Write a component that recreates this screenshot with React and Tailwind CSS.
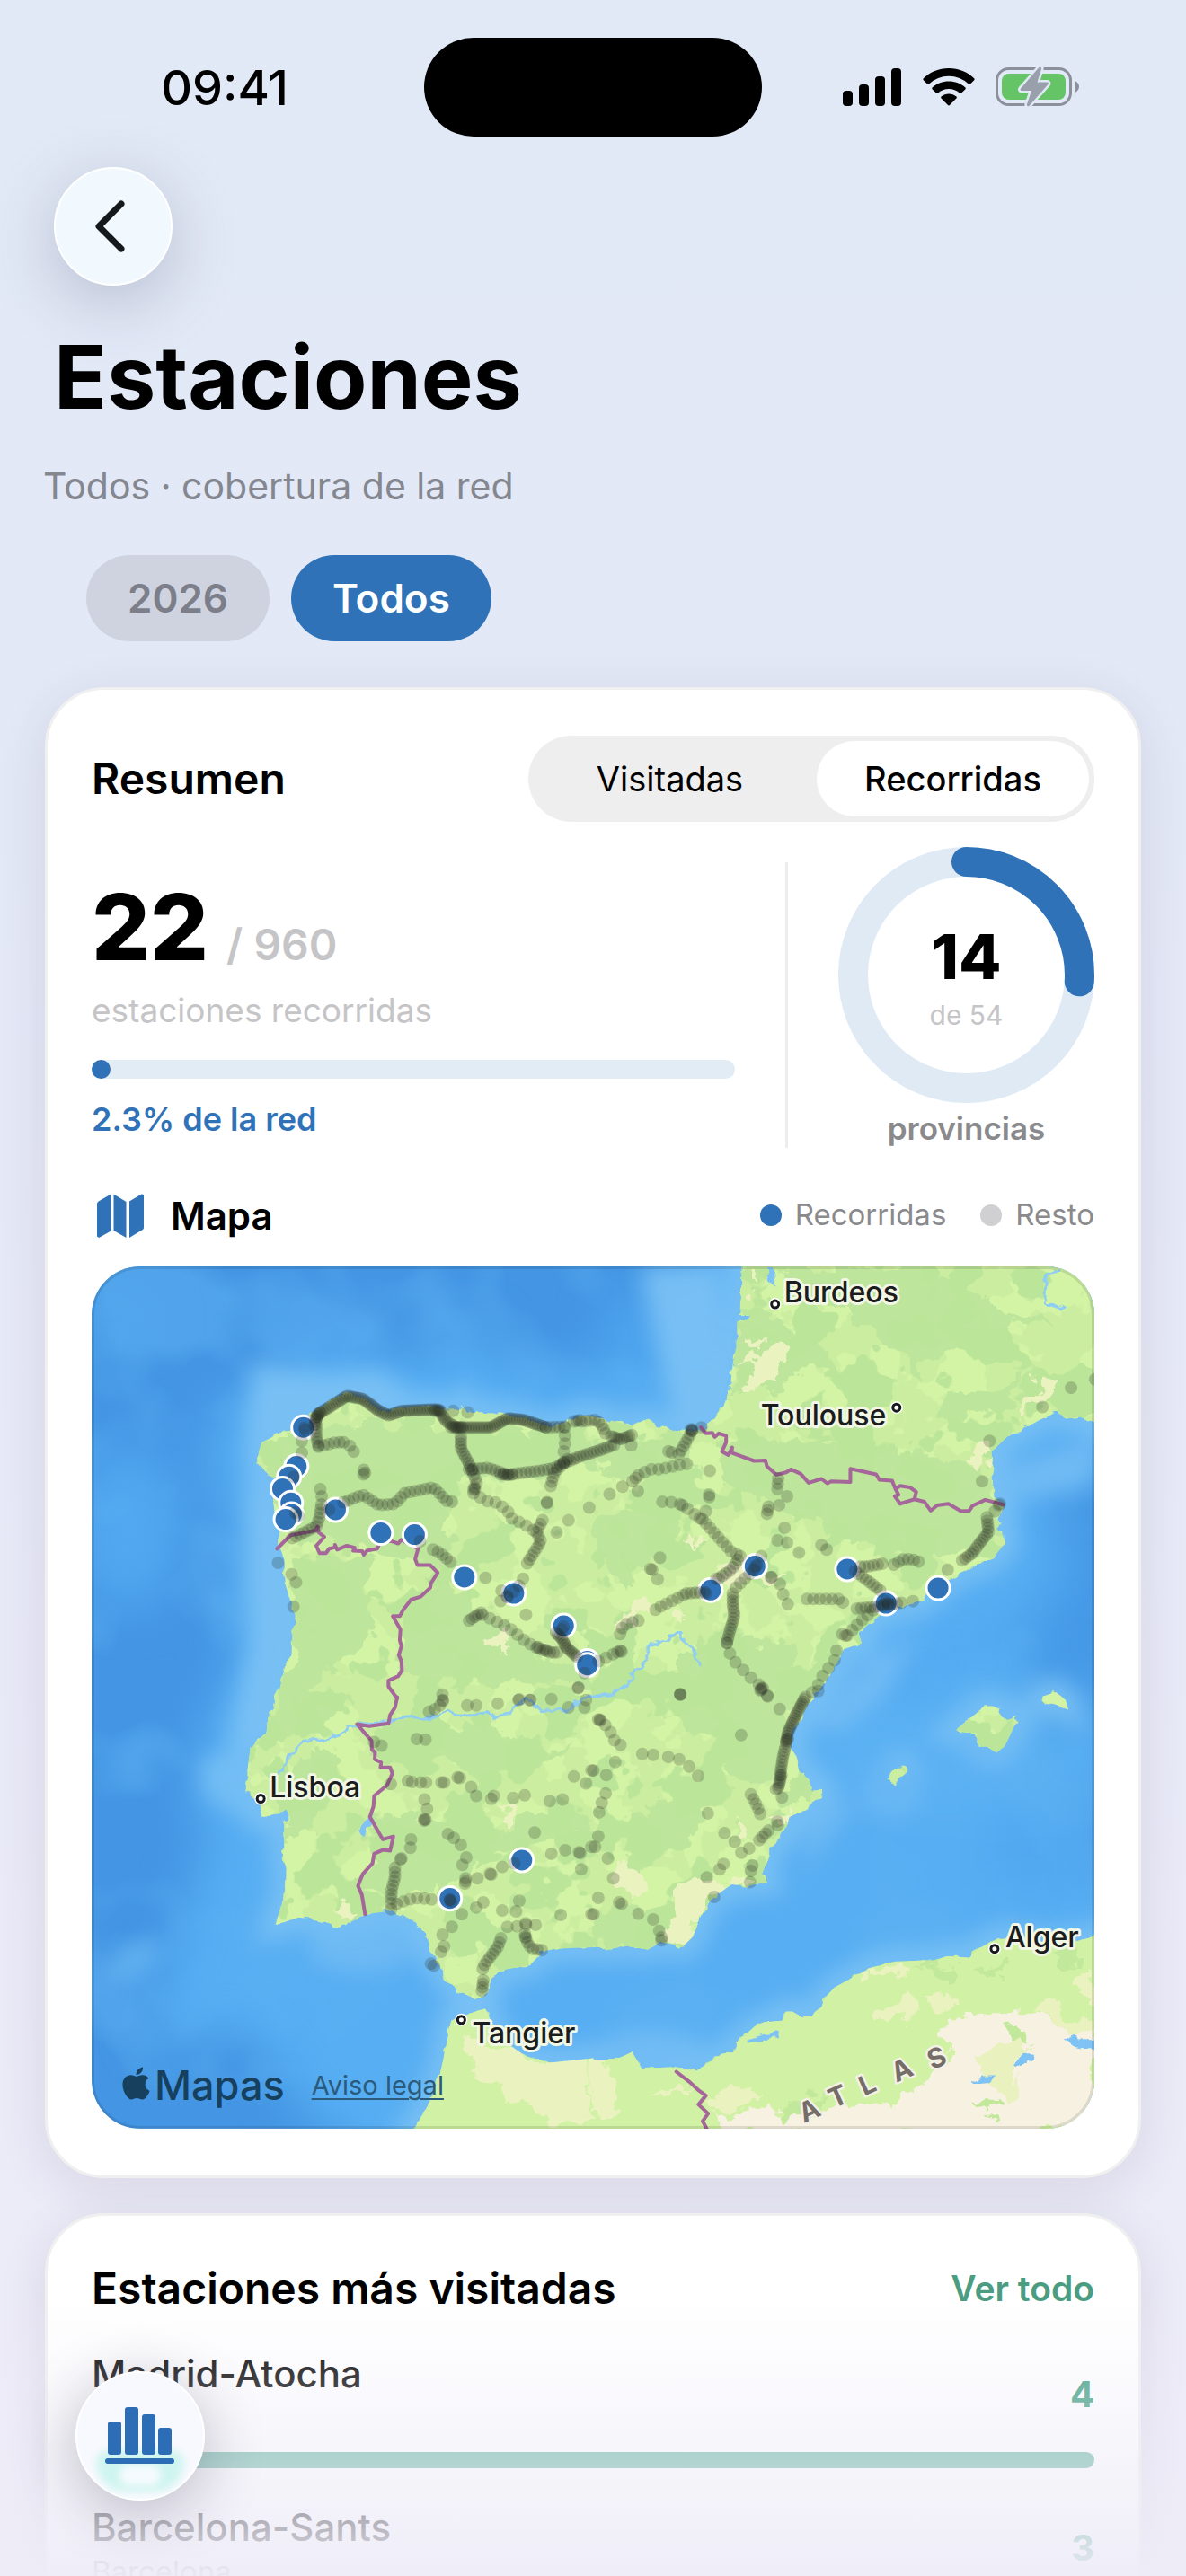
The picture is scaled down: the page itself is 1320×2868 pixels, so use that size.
import React from "react";
import { FaApple } from "react-icons/fa";

/* ---------- map geometry ---------- */

// Each sheet of the map has its own origin and scale: [originX, originY, unitsX, unitsY]
const SHEETS = {
  A: [-2, -11, 2.8, 3],
  B: [558, -11, 2.8, 3],
  C: [-2, 469, 2.8, 3],
  D: [558, 469, 2.8, 3],
  E: [278, 89, 3, 3],
};

const pts = (sheet, text) => {
  const [ox, oy, ux, uy] = SHEETS[sheet];
  return text
    .trim()
    .split(/\s+/)
    .map((p) => {
      const [x, y] = p.split(",").map(Number);
      return [x / ux + ox, y / uy + oy];
    });
};

const path = (parts, closed) =>
  "M" +
  parts
    .flatMap(([s, t]) => pts(s, t))
    .map(([x, y]) => `${x.toFixed(1)} ${y.toFixed(1)}`)
    .join("L") +
  (closed ? "Z" : "");

const EUROPE = path(
  [
    ["B", "462,0 460,120 455,195 490,195 480,210 448,220 445,300 435,350 425,440 405,500 375,545 340,575 300,590 250,580 200,565 160,545 120,565 30,540 0,535"],
    ["A", "1530,530 1490,550 1440,572 1380,550 1300,530 1260,520 1170,518 1160,495 1145,510 1100,512 1060,500 960,505 910,520 860,480 800,455 740,490 690,525 650,580 600,585 570,602 535,620 525,655 528,690 545,725 580,740 570,800 575,860 588,900 588,960 605,1010 610,1100 622,1140 640,1200 630,1260 628,1330 605,1380 590,1450"],
    ["C", "585,0 572,60 555,100 550,150 500,200 490,280 485,350 530,380 535,430 580,420 612,405 625,440 605,450 605,530 600,550 612,600 608,700 595,730 578,790 650,765 720,775 770,797 800,790 855,755 930,745 1000,770 1045,810 1060,880 1090,930 1110,970 1150,1010 1200,1038 1235,1020 1250,970 1290,940 1370,925 1410,880 1440,870 1568,865"],
    ["D", "0,860 40,875 100,860 170,872 210,845 240,850 275,865 310,830 330,770 360,710 430,655 480,660 540,648 525,620 545,560 565,510 600,470 610,430 665,405 680,380 712,358 712,342 680,345 672,305 640,280 632,230 612,195 612,160 640,110 665,60"],
    ["B", "690,1465 740,1390 780,1310 835,1290 825,1255 900,1190 950,1170 1030,1145 1090,1085 1150,1050 1200,1020 1240,1010 1280,960 1278,930 1255,910 1270,890 1265,860 1275,830 1245,800 1240,650 1290,600 1330,580 1390,545 1440,520 1480,540 1515,535 1570,560 1570,0"],
  ],
  true
);

const AFRICA = path(
  [
    ["C", "1000,1490 1060,1380 1090,1290 1110,1190 1125,1110 1200,1080 1230,1070 1240,1085 1250,1120 1275,1180 1310,1195 1360,1230 1430,1250 1568,1235"],
    ["D", "0,1240 70,1240 120,1215 150,1270 240,1265 320,1278 370,1245 400,1220 440,1215 450,1180 500,1130 530,1115 590,1110 600,1080 620,1080 650,1100 680,1095 690,1080 710,1065 720,1035 750,1000 800,970 860,935 940,912 1060,908 1100,895 1170,900 1200,870 1230,850 1300,830 1400,850 1480,850 1570,828 1570,1490"],
  ],
  true
);

const ISLANDS = [
  path([["D", "1128,140 1150,120 1180,95 1215,62 1240,60 1265,65 1270,95 1290,105 1318,98 1320,110 1300,150 1280,195 1255,215 1225,195 1200,195 1190,150 1165,148"]], true),
  path([["D", "1398,28 1440,14 1470,40 1478,72 1440,55 1400,45"]], true),
  path([["D", "912,300 945,262 965,262 975,282 935,322"]], true),
].join("");

const LAND = EUROPE + AFRICA + ISLANDS;

const DARK_PATCHES = [
  path([["B", "480,170 560,190 640,260 735,330 735,360 660,385 600,410 520,455 430,450 445,300 460,170"]], true),
  path([["B", "600,40 1090,40 1120,110 1180,130 1290,200 1400,200 1440,240 1310,230 1280,290 1180,310 1060,320 1015,420 975,340 960,310 860,250 800,180 700,160 610,150"]], true),
  path([["B", "1090,450 1330,420 1310,480 1250,520 1130,550 1085,520"]], true),
  path([["B", "380,600 560,600 760,625 960,640 1060,660 1230,700 1240,800 1270,840 1240,960 1120,1000 940,980 850,975 740,930 620,870 540,830 440,770 400,690"]], true),
  path([["B", "10,880 120,840 230,860 270,930 220,960 150,1030 110,1100 40,1040 10,960"]], true),
  path([["B", "0,590 130,610 260,600 330,700 250,740 100,730 0,700"]], true),
  path([["A", "530,640 720,560 900,560 1560,590 1560,700 1150,760 1110,880 1130,950 1100,1040 900,980 620,940 590,800 540,720"]], true),
  path([["A", "620,1010 900,1000 860,1120 880,1280 740,1400 640,1490 590,1480 640,1300"]], true),
  path([["A", "1090,1080 1200,1180 1290,1250 1420,1330 1560,1380 1560,1440 1350,1420 1100,1430 960,1380 970,1200"]], true),
  path([["C", "600,0 820,20 740,90 690,150 570,160 560,80"]], true),
  path([["C", "650,210 760,200 800,260 740,330 740,400 690,480 620,520 605,400 640,300"]], true),
  path([["C", "900,130 1240,110 1390,200 1490,190 1400,260 1240,290 1120,240 1020,240 880,210"]], true),
  path([["C", "880,420 1040,440 1180,480 1180,640 1080,680 930,700 830,650 900,560"]], true),
  path([["C", "1180,510 1360,430 1560,420 1560,500 1320,530 1200,600"]], true),
  path([["D", "250,0 580,0 600,180 590,300 500,320 420,270 430,210 370,140 290,130"]], true),
  path([["D", "110,440 240,360 310,340 330,460 260,540 130,620 105,520"]], true),
  path([["D", "0,760 110,740 210,780 180,860 0,860"]], true),
  path([["D", "570,330 660,310 680,380 600,400"]], true),
  path([["B", "330,1290 620,1290 620,1500 300,1500 250,1400"]], true),
].join("");

const SAND_PATCHES = [
  path([["B", "450,350 480,345 490,315 510,330 560,310 598,325 590,380 560,400 530,430 500,458 468,440 490,400 490,370"]], true),
  path([["B", "478,262 500,255 522,280 520,300 480,282"]], true),
  path([["B", "485,36 510,36 505,80 525,105 515,112 488,80"]], true),
  path([["B", "1380,400 1430,410 1400,460 1360,530 1342,530 1355,460"]], true),
  path([["B", "1175,655 1220,635 1245,640 1235,700 1210,722 1190,690"]], true),
  path([["B", "295,960 315,930 340,965"]], true),
  path([["B", "380,1040 420,1030 480,1060 590,1070 560,1110 500,1085 400,1090"]], true),
  path([["B", "130,1150 170,1140 160,1190 110,1230 80,1240"]], true),
  path([["B", "240,1170 275,1190 270,1212 230,1200"]], true),
  path([["A", "1255,1275 1290,1265 1295,1300 1275,1318"]], true),
  path([["C", "770,735 800,700 828,735 815,760 780,755"]], true),
  path([["C", "1285,375 1320,400 1320,440 1300,440"]], true),
  path([["D", "245,670 300,650 350,625 480,640 460,665 420,660 350,710 330,770 305,840 275,865 240,845 215,800 260,760 245,720"]], true),
  path([["D", "80,620 120,605 150,650 120,690 85,680"]], true),
  path([["D", "545,445 600,410 640,415 610,440 580,460"]], true),
  path([["D", "445,470 465,445 495,480 480,505"]], true),
  path([["C", "1165,1170 1300,1190 1420,1250 1560,1240 1560,1440 1500,1470 1430,1450 1390,1370 1320,1390 1290,1320 1210,1310 1180,1260"]], true),
  path([["D", "0,1245 60,1240 50,1310 80,1400 40,1440 0,1400"]], true),
  path([["D", "820,985 870,940 940,915 985,915 980,950 900,960"]], true),
  path([["D", "890,1050 980,1030 1015,1060 960,1100 930,1135 895,1100"]], true),
  path([["D", "1040,1060 1100,1030 1130,1085 1080,1075"]], true),
  path([["D", "360,1390 420,1330 530,1340 480,1380 400,1410"]], true),
  path([["D", "170,1360 240,1330 320,1325 250,1355"]], true),
  path([["D", "1490,990 1562,940 1562,1060 1520,1020"]], true),
].join("");

const DESERT = path(
  [["D", "1110,1130 1180,1080 1240,1105 1290,1080 1400,1100 1562,1160 1562,1480 420,1480 380,1430 470,1400 560,1410 590,1440 660,1400 800,1390 880,1400 990,1350 1060,1300 1110,1200 1075,1130"]],
  true
);

const STEPPE = [
  path([["D", "1360,1080 1430,1045 1490,1080 1562,1120 1562,1165 1480,1130"]], true),
  path([["D", "1205,1220 1330,1170 1360,1180 1300,1240 1310,1340 1250,1340 1200,1290"]], true),
  path([["D", "1280,1340 1350,1290 1320,1390 1290,1390"]], true),
].join("");

const OASES = [
  path([["D", "1265,1130 1310,1118 1355,1165 1300,1180"]], true),
  path([["D", "1195,1400 1230,1380 1265,1390 1235,1435"]], true),
  path([["D", "1180,950 1285,915 1290,940 1240,960"]], true),
  path([["D", "990,915 1060,915 1135,940 1100,970 1060,945"]], true),
  path([["D", "1420,890 1530,880 1520,930 1450,930"]], true),
  path([["D", "570,1420 640,1380 740,1350 680,1430 600,1440"]], true),
].join("");

const LAKES = [
  path([["D", "485,1178 500,1160 575,1150 572,1165 520,1180"]], true),
  path([["D", "1308,1265 1335,1225 1370,1220 1365,1235 1318,1270"]], true),
  path([["D", "1178,1320 1210,1292 1248,1292 1235,1315"]], true),
  path([["D", "1470,1175 1490,1158 1510,1170 1562,1168 1562,1210 1500,1195"]], true),
  path([["C", "835,480 880,420 885,445 850,495"]], true),
  path([["B", "538,36 555,36 565,95 548,80"]], true),
].join("");

const BORDERS = [
  path([
    ["A", "583,975 625,930 700,915 710,900 712,920 730,935 722,945 705,965 715,990 735,990 745,975 765,970 763,962 770,978 800,965 825,972 820,982 848,983 853,995 862,982 895,975 905,950 940,950 960,958 970,945 1000,962 1022,975 1013,1010 1020,1030 1060,1030 1083,1055 1062,1090 1060,1105 1030,1135 1000,1145 975,1180 965,1200 943,1200 967,1245 965,1280 970,1300 962,1330 970,1350 972,1380 960,1400 930,1415 930,1435 957,1475"],
    ["C", "957,30 950,65 935,90 930,118 870,127 832,120 860,155 877,175 878,205 888,215 887,238 907,248 905,265 935,265 942,285 925,325 885,360 883,395 872,430 912,505 945,495 935,543 912,540 885,553 880,585 850,620 835,660 847,690 857,755"],
  ]),
  path([["B", "335,570 350,590 370,588 378,602 390,590 413,598 413,620 400,650 420,662 432,637 430,655 500,682 535,680 540,700 570,728 600,720 615,710 645,725 670,755 710,742 728,757 740,750 800,752 800,708 880,727 890,745 930,748 940,775 950,795 938,800 955,825 1000,810 1030,818 1050,848 1070,830 1105,825 1145,850 1170,848 1180,832 1220,812 1275,828"]]),
  path([["B", "942,775 955,765 985,770 1005,785 1000,808"]]),
  path([["D", "258,1280 300,1315 325,1340 350,1360 327,1390 357,1420 340,1445 355,1475"]]),
].join("");

const RIVERS = [
  path([
    ["B", "333,1368 315,1320 268,1263 235,1265 225,1282 172,1300 150,1375 130,1385 100,1430 55,1465 0,1465"],
    ["C", "1540,35 1490,70 1435,77 1405,75 1360,38 1325,60 1307,88 1260,92 1230,78 1200,90 1150,92 1115,77 1080,90 1040,103 1005,92 940,108 930,118 832,122 800,130 775,158 720,172 660,177 625,220 610,260 585,290"],
  ]),
  path([["B", "1450,40 1410,55 1405,150 1450,180 1465,158"]]),
].join("");

// [sheet, spacing between stops, route]
const ROUTES = [
  ["A", 3, "700,560 710,525 750,500 800,465 850,475 900,515 930,530 970,515 1085,510 1110,550 1140,570 1250,570 1300,540 1350,545 1420,570"],
  ["A", 3, "700,540 720,520"],
  ["A", 3, "1075,515 1095,515"],
  ["A", 3, "1125,570 1160,570"],
  ["A", 5, "1420,570 1485,568"],
  ["A", 4, "705,560 705,600 712,635"],
  ["A", 6, "712,635 765,620 790,620"],
  ["A", 8, "790,620 815,635 827,665"],
  ["A", 4, "1155,600 1155,640 1180,690 1190,715"],
  ["A", 5, "1190,715 1205,755 1195,775"],
  ["A", 5, "1180,710 1240,705 1300,728 1400,715 1450,705 1490,675"],
  ["A", 3, "1280,727 1320,728"],
  ["A", 5, "630,940 660,925 705,900 715,870 722,820"],
  ["A", 8, "722,800 715,765"],
  ["A", 6, "790,820 850,795 900,830 950,825 980,790 1070,770 1110,815 1140,820"],
  ["E", 3, "775,250 800,245"],
  ["E", 5, "800,250 850,245 870,265 880,290"],
  ["E", 3, "900,300 930,310 970,295"],
  ["E", 4, "740,390 800,365 850,350 920,325"],
  ["E", 9, "745,270 745,335 735,375"],
  ["E", 5, "740,390 710,420 695,475"],
  ["E", 5, "670,580 650,620 665,650 640,690 615,730"],
  ["E", 9, "605,775 585,810 530,850 520,870"],
  ["E", 9, "440,490 480,515 520,522 555,550 560,570 620,600 650,620"],
  ["E", 5, "970,450 990,430"],
  ["E", 8, "990,430 1030,410 1060,410 1130,395 1165,390"],
  ["E", 4, "1090,350 1105,355"],
  ["E", 5, "1125,360 1145,325 1170,280"],
  ["E", 10, "1070,518 1100,520 1137,528 1170,555 1215,585"],
  ["E", 7, "1215,590 1250,630 1300,685 1330,700"],
  ["E", 5, "1330,700 1300,745 1250,780"],
  ["E", 5, "1210,820 1140,825"],
  ["E", 7, "1140,830 1060,870 1030,890"],
  ["E", 7, "990,915 940,930 925,970"],
  ["E", 9, "930,1015 880,1040 835,1060"],
  ["E", 7, "1375,745 1310,810"],
  ["E", 4, "1305,825 1305,860 1310,900 1295,950 1285,990"],
  ["E", 12, "1285,990 1300,1040 1340,1080 1370,1110 1400,1135"],
  ["E", 6, "305,678 330,690 370,725"],
  ["E", 4, "425,915 440,905 470,885"],
  ["E", 9, "470,895 560,940 620,990 700,1020"],
  ["E", 4, "650,1005 700,1022 730,1020"],
  ["E", 3, "715,955 735,975 750,1005 790,1040"],
  ["B", 6, "575,740 572,790"],
  ["B", 4, "545,835 540,860"],
  ["B", 5, "830,1035 850,1035 900,1025"],
  ["B", 6, "935,1028 970,1008 1010,1015 1022,1030"],
  ["B", 5, "815,1050 870,1095 900,1120"],
  ["B", 5, "820,1175 870,1170 960,1155"],
  ["B", 7, "665,1143 770,1143 780,1160"],
  ["B", 12, "555,1070 580,1090 590,1125 605,1160"],
  ["B", 4, "1225,870 1230,920 1200,960 1180,990 1140,1020"],
  ["B", 8, "870,1180 820,1230 790,1265"],
  ["B", 4, "775,1260 795,1270"],
  ["B", 11, "757,1315 750,1350 715,1395 695,1440 660,1475"],
  ["D", 3, "660,30 630,90 605,150 600,185"],
  ["D", 4, "600,185 590,230 580,300"],
  ["D", 3, "585,290 575,335 565,338"],
  ["D", 6, "490,355 510,395 525,435"],
  ["D", 4, "573,445 575,462"],
  ["D", 5, "545,475 510,515"],
  ["D", 10, "485,535 460,550"],
  ["D", 10, "15,105 45,130 60,160 70,188 88,190"],
  ["C", 7, "1098,22 1100,50 1075,70 1050,82"],
  ["C", 5, "990,310 1010,315"],
  ["C", 6, "1030,315 1050,315"],
  ["C", 5, "950,600 950,635 940,670 938,720"],
  ["C", 8, "955,720 1010,700 1050,703 1080,708"],
  ["C", 5, "1355,820 1360,845 1375,870 1410,875"],
  ["C", 5, "1280,835 1270,865 1230,920 1220,945"],
  ["C", 4, "1225,975 1222,1000 1220,1015"],
  ["C", 4, "1062,920 1078,932"],
];

const STOPS = [
  ["A", "660,615 660,655 853,712 857,722 852,727 586,1022 628,1060 642,1087 634,1168 670,578 668,572 635,735 650,865 640,855 745,845 1028,950 1300,1137 1282,1115"],
  ["E", "372,215 420,220 717,620 757,580 826,538 894,493 988,483 937,468 966,330 1228,415 1226,495 1226,503 1215,550 1137,530 1195,573 1062,705 1030,742 1036,745 1054,777 480,772 615,895 790,1138 1400,700 1432,770 1130,1160 1130,1162 685,520 685,523 1170,278 1167,282 1165,276 1200,270 1400,1140 1405,1140 1420,1165 920,1020 934,1018 1250,775 1380,735 1385,730 1215,825 740,935 735,945 810,1090 440,478 445,476 590,1180 630,1180 337,1180"],
  ["B", "603,800 578,830 595,905 573,947 603,955 640,988 710,963 726,978 995,1150 1265,825 1262,830 1250,850 1103,1045 1487,438 1398,502 1233,615 1210,750 1562,410 910,1150 905,1160 918,1158"],
  ["D", "587,365 700,10 440,513 408,484 356,418 460,157 580,70 542,28 522,5 270,22 495,592 490,610 488,648 405,587 393,605 353,632 376,697 68,247 40,290 38,352 26,383 18,415 152,220 186,223 233,230 267,238 298,262 326,293 15,495 5,530 45,568 62,635 15,700 80,715 88,720 140,753 186,772 205,810 212,832 212,842 0,275 0,755 20,105 22,108 520,8 600,175 605,170"],
  ["C", "1175,58 1203,58 1270,52 1337,38 1370,40 1437,37 1490,65 1540,65 1520,0 1545,40 885,180 908,192 1018,170 1045,172 937,320 1095,315 1103,315 1145,298 1152,300 1187,330 1203,360 1250,370 1258,360 1318,367 1354,358 1432,377 1472,372 1507,295 1545,318 1562,275 1042,372 1050,403 1042,437 1045,440 1040,442 1000,505 998,533 970,568 967,572 938,738 1115,487 1133,500 1155,523 1172,565 1160,590 1170,635 1170,645 1168,652 1207,635 1246,620 1250,622 1284,597 1322,585 1385,482 1437,553 1480,541 1523,548 1527,551 1530,605 1562,530 1158,755 1203,732 1225,715 1127,797 1098,823 1103,862 1094,880 1284,742 1327,745 1337,710 1466,757 1562,755 1300,797 1330,795 1357,785 1358,790 1388,790 1355,830 1120,708 1125,712 1122,705"],
];

const VISITED = [
  ["A", "665,570 643,700 620,735 600,775 626,822 628,860 610,877 765,845 906,922 1011,928 1166,1070 1320,1124 1475,1232 1549,1350 1549,1363"],
  ["B", "503,1033 365,1113 790,1043 911,1157 1073,1106"],
  ["C", "1345,574 1121,702"],
].flatMap(([s, t]) => pts(s, t));

const along = (points, step) => {
  const out = [points[0]];
  let carry = 0;
  for (let i = 1; i < points.length; i++) {
    const [x0, y0] = points[i - 1];
    const [x1, y1] = points[i];
    const len = Math.hypot(x1 - x0, y1 - y0);
    let d = step - carry;
    while (d <= len) {
      out.push([x0 + ((x1 - x0) * d) / len, y0 + ((y1 - y0) * d) / len]);
      d += step;
    }
    carry = len - (d - step);
  }
  return out;
};

const REST = [
  ...ROUTES.flatMap(([s, step, t]) => along(pts(s, t), step)),
  ...STOPS.flatMap(([s, t]) => pts(s, t)),
];

const CITIES = [
  { name: "Burdeos", x: 770, y: 40, cx: 760, cy: 42 },
  { name: "Toulouse", x: 744, y: 177, cx: 895, cy: 157 },
  { name: "Lisboa", x: 198, y: 590, cx: 188, cy: 592 },
  { name: "Tangier", x: 423, y: 864, cx: 411, cy: 838 },
  { name: "Alger", x: 1016, y: 757, cx: 1004, cy: 759 },
];

function NetworkMap() {
  return (
    <svg viewBox="0 0 1115 959" className="block w-full" role="img" aria-label="Mapa de estaciones">
      <defs>
        <clipPath id="land">
          <path d={LAND} />
        </clipPath>
        <filter id="soft-wide" x="-50%" y="-50%" width="200%" height="200%" colorInterpolationFilters="sRGB">
          <feGaussianBlur stdDeviation="26" />
        </filter>
        <filter id="soft" x="-50%" y="-50%" width="200%" height="200%" colorInterpolationFilters="sRGB">
          <feGaussianBlur stdDeviation="12" />
        </filter>
        <filter id="ragged" x="0" y="0" width="100%" height="100%" colorInterpolationFilters="sRGB">
          <feTurbulence type="fractalNoise" baseFrequency="0.04" numOctaves="4" seed="4" />
          <feDisplacementMap in="SourceGraphic" scale="40" xChannelSelector="R" yChannelSelector="G" />
        </filter>
        <filter id="ragged-fine" x="0" y="0" width="100%" height="100%" colorInterpolationFilters="sRGB">
          <feTurbulence type="fractalNoise" baseFrequency="0.09" numOctaves="2" seed="8" />
          <feDisplacementMap in="SourceGraphic" scale="10" xChannelSelector="R" yChannelSelector="G" />
        </filter>
        <filter id="mottle" x="0" y="0" width="100%" height="100%" colorInterpolationFilters="sRGB">
          <feTurbulence type="fractalNoise" baseFrequency="0.018" numOctaves="4" seed="11" />
          <feColorMatrix values="0 0 0 0 0.735  0 0 0 0 0.898  0 0 0 0 0.6  40 0 0 0 -22" />
        </filter>
        <filter id="mottle-light" x="0" y="0" width="100%" height="100%" colorInterpolationFilters="sRGB">
          <feTurbulence type="fractalNoise" baseFrequency="0.02" numOctaves="4" seed="29" />
          <feColorMatrix values="0 0 0 0 0.828  0 0 0 0 0.953  0 0 0 0 0.648  40 0 0 0 -20" />
        </filter>
        <filter id="waves" x="0" y="0" width="100%" height="100%" colorInterpolationFilters="sRGB">
          <feTurbulence type="fractalNoise" baseFrequency="0.007" numOctaves="3" seed="5" />
          <feColorMatrix values="0 0 0 0 0.37  0 0 0 0 0.7  0 0 0 0 0.95  4 0 0 0 -1.9" />
        </filter>
      </defs>

      <rect width="1115" height="959" fill="#4496e4" />
      <g filter="url(#soft-wide)">
        <path d="M560 959L640 800L800 640L900 480L1000 330L1115 300V800L900 900Z" fill="#52a8f0" />
        <path d="M60 860L140 600L250 560L420 640L700 650L1000 600L1000 830L400 959L250 959L180 850Z" fill="#57aef2" />
        <path d={LAND} fill="none" stroke="#57aef2" strokeWidth="110" />
        <ellipse cx="40" cy="290" rx="60" ry="90" fill="#52a8f0" />
        <ellipse cx="950" cy="540" rx="150" ry="70" fill="#5bb1f3" />
        <ellipse cx="20" cy="60" rx="50" ry="30" fill="#4a9fe9" />
        <ellipse cx="620" cy="80" rx="50" ry="60" fill="#4fa5ee" />
        <path d="M1040 420L1115 300V480L1060 540Z" fill="#4599e6" />
      </g>
      <rect width="1115" height="959" filter="url(#waves)" opacity=".5" />
      <g filter="url(#soft)" opacity=".9">
        <path d={LAND} fill="none" stroke="#7cc2f5" strokeWidth="30" />
        <path d="M610 0L700 0V190L650 190Z" fill="#7cc2f5" />
        <path d="M180 110L260 120L320 115L370 150L280 170L170 200Z" fill="#7cc2f5" />
        <path d="M170 230L205 280L225 420L190 520L150 540L175 420Z" fill="#7cc2f5" />
        <path d="M120 550L180 530L175 620L125 590Z" fill="#76bff5" />
        <path d="M870 435L920 410L880 480L830 520L800 510Z" fill="#74bdf5" />
        <path d="M800 590L850 600L810 650L790 680Z" fill="#70bbf4" />
        <path d="M960 510L1030 480L1020 540L990 560Z" fill="#72bcf4" />
        <path d="M1000 230L1115 190V240L1040 260Z" fill="#74bdf5" />
        <ellipse cx="890" cy="585" rx="36" ry="30" fill="#6ab8f4" />
        <ellipse cx="620" cy="870" rx="60" ry="20" fill="#74bdf5" />
        <ellipse cx="300" cy="760" rx="60" ry="24" fill="#70bbf4" />
      </g>
      <path d="M10 790L60 750L70 760L20 800Z" fill="#6cb8f2" filter="url(#soft)" />

      <g filter="url(#ragged-fine)">
        <path d={LAND} fill="#cbeda0" />
      </g>
      <g clipPath="url(#land)">
        <rect width="1115" height="959" filter="url(#mottle-light)" />
        <g filter="url(#ragged)">
          <rect width="1115" height="959" fill="none" />
          <path d={DARK_PATCHES} fill="#bde59b" />
        </g>
        <rect width="1115" height="959" filter="url(#mottle)" />
        <g filter="url(#ragged)">
          <rect width="1115" height="959" fill="none" />
          <path d={AFRICA} fill="#d1f2a4" stroke="#d1f2a4" strokeWidth="20" />
          <path d={DESERT} fill="#f6f1e0" />
          <path d={SAND_PATCHES} fill="#eaf2c0" />
          <path d={STEPPE} fill="#e9f1bf" />
          <path d={OASES} fill="#c2e89c" />
        </g>
      </g>
      <g filter="url(#ragged-fine)">
        <path d={LAKES} fill="#7fc3f5" />
        <path d={RIVERS} fill="none" stroke="#8fcdf3" strokeWidth="3" strokeLinejoin="round" />
      </g>
      <path d={BORDERS} fill="none" stroke="#a5669a" strokeWidth="4" strokeLinejoin="round" strokeLinecap="round" />

      {VISITED.map(([x, y], i) => (
        <circle key={i} cx={x} cy={y} r="13" fill="#2f72b8" stroke="#fff" strokeWidth="3" />
      ))}
      {REST.map(([x, y], i) => (
        <circle key={i} cx={x} cy={y} r="7" fill="#25281f" fillOpacity=".22" />
      ))}

      {CITIES.map((c) => (
        <g key={c.name}>
          <circle cx={c.cx} cy={c.cy} r="4" fill="#fff" stroke="#fff" strokeWidth="6" />
          <circle cx={c.cx} cy={c.cy} r="4" fill="#fff" stroke="#17191b" strokeWidth="3" />
          <text
            x={c.x}
            y={c.y}
            className="font-medium"
            fontSize="32"
            fill="#1a1c1e"
            stroke="#f1f7e4"
            strokeWidth="6"
            strokeLinejoin="round"
            paintOrder="stroke"
          >
            {c.name}
          </text>
        </g>
      ))}
      <text
        x="792 825 859 895 935"
        y="953 937 923 908 894"
        rotate="-24"
        className="font-bold"
        fontSize="30"
        fill="#756d68"
        stroke="#f4f1e6"
        strokeWidth="5"
        strokeLinejoin="round"
        paintOrder="stroke"
      >
        ATLAS
      </text>
    </svg>
  );
}

/* ---------- icons ---------- */

const Signal = () => (
  <svg viewBox="0 0 66 42" className="h-[42px] w-[66px]" aria-hidden="true">
    <rect x="0" y="25" width="11" height="17" rx="4" />
    <rect x="18" y="18" width="11" height="24" rx="4" />
    <rect x="36" y="9" width="11" height="33" rx="4" />
    <rect x="54" y="0" width="11" height="42" rx="4" />
  </svg>
);

const Wifi = () => (
  <svg viewBox="0 0 58 42" className="h-[42px] w-[58px]" aria-hidden="true">
    <path d="M29 0C18 0 8 4 .8 11.200a1.500 1.500 0 0 0 0 2L5 17.500a1.500 1.500 0 0 0 2 0A32 32 0 0 1 51 17.500a1.500 1.500 0 0 0 2 0L57.200 13.200a1.500 1.500 0 0 0 0-2C50 4 40 0 29 0Z" />
    <path d="M29 14.500C22 14.500 15.500 17 10.700 21.300a1.500 1.500 0 0 0 0 2.100L15 27.600a1.500 1.500 0 0 0 2 0A18 18 0 0 1 41 27.600a1.500 1.500 0 0 0 2 0L47.300 23.400a1.500 1.500 0 0 0 0-2.100C42.500 17 36 14.500 29 14.500Z" />
    <path d="M29 28.500c-3 0-6 1-8.400 2.900a1.500 1.500 0 0 0 0 2.200L28 41a1.500 1.500 0 0 0 2 0l7.400-7.400a1.500 1.500 0 0 0 0-2.200C35 29.500 32 28.500 29 28.500Z" />
  </svg>
);

const Battery = () => (
  <svg viewBox="0 0 94 46" className="h-[46px] w-[94px]" aria-hidden="true">
    <rect x="1.500" y="2.500" width="82" height="40" rx="13" fill="none" stroke="#8b909b" strokeWidth="3" />
    <path d="M88 16c3 1 5 3.500 5 6.500s-2 5.500-5 6.500Z" fill="#8b909b" />
    <rect x="7" y="8" width="71" height="29" rx="8" fill="#65c466" />
    <path
      d="M48 1.500L28 24.500c-1 1.200-.3 2.500 1 2.500h11l-5 15c-.7 2.200 1.500 3 2.800 1.400L58.500 20c1-1.200.3-2.500-1-2.500H46.500L51 3c.7-2.200-1.500-3-3-1.500Z"
      fill="#9aa0ab"
      stroke="#e2e9f6"
      strokeWidth="5"
      paintOrder="stroke"
    />
  </svg>
);

const MapIcon = () => (
  <svg viewBox="0 0 52 49" className="h-[49px] w-[52px]" fill="#2f72b8" aria-hidden="true">
    <path d="M15.500.5V41.500L3 48.500C1.500 49.200 0 48.500 0 46.500V11.500C0 10 .6 9 2 8.200Z" />
    <path d="M18.500.5L32.500 9V49L18.500 41Z" />
    <path d="M36 8.500L49 .8C50.500 0 52 .8 52 2.500V37.500C52 39 51.500 39.800 50 40.600L36 49Z" />
  </svg>
);

const BarsIcon = () => (
  <svg viewBox="0 0 78 64" className="relative h-[64px] w-[78px]" fill="#2d6db6" aria-hidden="true">
    <rect x="3" y="16" width="15" height="37" rx="3" />
    <rect x="22" y="0" width="15" height="53" rx="3" />
    <rect x="41" y="8" width="15" height="45" rx="3" />
    <rect x="59" y="23" width="15" height="30" rx="3" />
    <rect x="0" y="57" width="77" height="6" rx="3" />
  </svg>
);

/* ---------- pieces ---------- */

function Card({ children }) {
  return (
    <section className="rounded-[66px] border-[3px] border-[#f0f0f1] bg-white px-[49px] pt-[51px] pb-[52px] shadow-[0_12px_54px_rgba(60,50,70,0.11)]">
      {children}
    </section>
  );
}

function Ring({ value, total }) {
  const r = 126;
  const c = 2 * Math.PI * r;
  return (
    <div className="grid size-[285px] place-items-center">
      <svg viewBox="0 0 285 285" className="col-start-1 row-start-1 size-full -rotate-90" aria-hidden="true">
        <circle cx="142.500" cy="142.500" r={r} fill="none" stroke="#dfeaf5" strokeWidth="33" />
        <circle
          cx="142.500"
          cy="142.500"
          r={r}
          fill="none"
          stroke="#2f72b8"
          strokeWidth="33"
          strokeLinecap="round"
          strokeDasharray={`${(c * value) / total} ${c}`}
        />
      </svg>
      <div className="col-start-1 row-start-1 flex flex-col items-center pt-[12px] text-center">
        <span className="text-[69px] leading-[76px] font-extrabold">{value}</span>
        <span className="text-[30px] leading-[54px] text-[#c5c5c7]">de {total}</span>
      </div>
    </div>
  );
}

function StationRow({ name, city, count }) {
  return (
    <li className="h-[171px]">
      <div className="flex h-[100px] items-center justify-between">
        <div className="h-full">
          <p className="text-[42px] leading-[54px] font-medium">{name}</p>
          {city && <p className="text-[33px] leading-[44px] text-[#8a8a8d]">{city}</p>}
        </div>
        <span className="text-[40px] leading-[48px] font-bold text-[#3f9f80]">{count}</span>
      </div>
      <div className="mt-[14px] h-[18px] rounded-full bg-[#6bb8a4]" />
    </li>
  );
}

export default function App() {
  const [scope, setScope] = React.useState("Recorridas");
  return (
    <div className="relative h-screen overflow-hidden bg-linear-to-b from-[#e1e9f6] via-[#e4e8f7] via-40% to-[#eeecf8] font-['Inter',sans-serif] text-black">
      <header className="grid h-[186px] grid-cols-[1fr_376px_1fr] items-start pt-[42px]">
        <time className="flex h-[110px] items-center justify-center pl-[28px] text-[54px] font-medium">09:41</time>
        <div className="h-[110px] rounded-full bg-black" />
        <div className="flex h-[110px] items-center justify-center gap-[23px] pr-[28px]">
          <Signal />
          <Wifi />
          <Battery />
        </div>
      </header>

      <div className="pl-[60px]">
        <button
          aria-label="Atrás"
          className="grid size-[132px] place-items-center rounded-full border-2 border-white bg-[#f1f8fe] shadow-[0_18px_72px_rgba(60,70,100,0.26)]"
        >
          <svg viewBox="0 0 34 58" className="mr-[8px] h-[58px] w-[34px]" fill="none" stroke="#15191c" strokeWidth="7" strokeLinecap="round" strokeLinejoin="round" aria-hidden="true">
            <path d="M30 4L5 29L30 54" />
          </svg>
        </button>
        <h1 className="mt-[42px] text-[97px] leading-[120px] font-bold">Estaciones</h1>
      </div>
      <p className="mt-[34px] pl-[48px] text-[41px] leading-[54px] text-[#84878f]">Todos · cobertura de la red</p>

      <div className="mt-[50px] flex gap-[24px] pl-[96px]">
        <button className="h-[96px] rounded-full bg-[#cfd3e0] px-[46px] text-[44px] font-semibold text-[#7c7f8a]">2026</button>
        <button className="h-[96px] rounded-full bg-[#2f72b8] px-[46px] text-[44px] font-semibold text-white">Todos</button>
      </div>

      <main className="mt-[51px] flex flex-col gap-[39px] px-[50px]">
        <Card>
          <div className="flex items-center justify-between">
            <h2 className="text-[48px] font-semibold">Resumen</h2>
            <div className="grid h-[96px] w-[630px] grid-cols-2 gap-[12px] rounded-full bg-[#eeeeef] p-[6px]">
              {["Visitadas", "Recorridas"].map((s) => (
                <button
                  key={s}
                  aria-pressed={scope === s}
                  onClick={() => setScope(s)}
                  className="rounded-full text-[38px] aria-pressed:bg-white aria-pressed:font-medium"
                >
                  {s}
                </button>
              ))}
            </div>
          </div>

          <div className="mt-[28px] flex">
            <div className="flex-1 pt-[29px]">
              <p className="flex items-baseline gap-[20px]">
                <span className="text-[102px] leading-[120px] font-extrabold">22</span>
                <span className="text-[48px] font-semibold text-[#c5c5c7]">/ 960</span>
              </p>
              <p className="mt-[8px] text-[37px] leading-[50px] text-[#c5c5c7]">estaciones recorridas</p>
              <div className="mt-[30px] h-[21px] rounded-full bg-[#e2ecf5]">
                <div className="h-full min-w-[21px] rounded-full bg-[#2f72b8]" style={{ width: "2.3%" }} />
              </div>
              <p className="mt-[21px] text-[36px] leading-[48px] font-semibold text-[#2f72b8]">2.3% de la red</p>
            </div>
            <div className="mx-[56px] mt-[17px] w-[3px] self-stretch bg-[#ededee]" />
            <div className="flex w-[285px] flex-col items-center">
              <Ring value={14} total={54} />
              <p className="mt-[6px] text-[35px] leading-[44px] font-semibold text-[#8a8a8d]">provincias</p>
            </div>
          </div>

          <div className="mt-[50px] flex h-[50px] items-center justify-between">
            <h3 className="flex items-center gap-[30px] pl-[6px] text-[42px] font-semibold">
              <MapIcon />
              Mapa
            </h3>
            <div className="flex items-center gap-[38px] text-[33px] text-[#8a8a8d]">
              <span className="flex items-center gap-[15px]">
                <i className="size-[24px] rounded-full bg-[#2f72b8]" />
                Recorridas
              </span>
              <span className="flex items-center gap-[15px]">
                <i className="size-[24px] rounded-full bg-[#d0d0d2]" />
                Resto
              </span>
            </div>
          </div>

          <div className="relative mt-[32px] overflow-hidden rounded-[54px]">
            <NetworkMap />
            <div className="pointer-events-none absolute inset-0 rounded-[54px] border-[3px] border-black/10" />
            <div className="absolute bottom-[14px] left-[29px] flex items-center gap-[30px]">
              <span className="flex items-center text-[45px] font-medium text-[#17405f]">
                <FaApple className="mb-[6px] size-[41px]" />
                Mapas
              </span>
              <a href="#aviso-legal" className="text-[29px] text-[#2b5a7c] underline decoration-2 underline-offset-4">
                Aviso legal
              </a>
            </div>
          </div>
        </Card>

        <Card>
          <div className="flex items-center justify-between">
            <h2 className="text-[48px] leading-[60px] font-semibold">Estaciones más visitadas</h2>
            <a href="#todo" className="text-[39px] font-semibold text-[#4b9c80]">Ver todo</a>
          </div>
          <ul className="mt-[38px]">
            <StationRow name="Madrid-Atocha" count={4} />
            <StationRow name="Barcelona-Sants" city="Barcelona" count={3} />
          </ul>
        </Card>
      </main>

      <div className="pointer-events-none absolute inset-x-0 bottom-0 h-[310px] bg-linear-to-b from-[#eeecf7]/0 via-[#eeecf7]/50 via-55% to-[#eeecf7]/95" />
      <button
        aria-label="Estadísticas"
        className="absolute bottom-[84px] left-[84px] grid size-[144px] place-items-center rounded-full border-2 border-white bg-[#f8f9fe] shadow-[0_12px_66px_rgba(40,40,60,0.28)]"
      >
        <span className="absolute bottom-[8px] h-[46px] w-[98px] rounded-t-[20px] rounded-b-[49px] bg-[#cff5f0] blur-[4px]" />
        <span className="absolute bottom-[14px] h-[24px] w-[46px] rounded-full bg-[#f4fafd] blur-[4px]" />
        <BarsIcon />
      </button>
    </div>
  );
}
